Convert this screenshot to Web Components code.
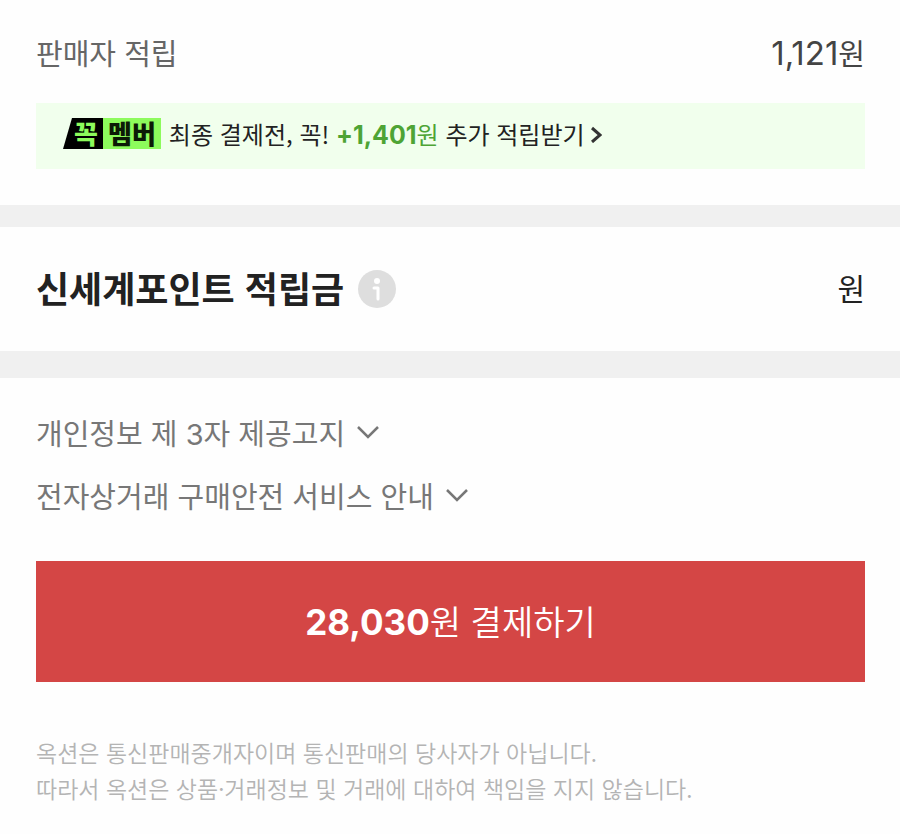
<!DOCTYPE html>
<html lang="ko">
<head>
<meta charset="utf-8">
<meta name="viewport" content="width=device-width, initial-scale=1">
<title>결제하기</title>
<style>
  body {
    margin: 0;
    background: #fefefe;
    color: #333;
    font-family: "Noto Sans CJK KR", "Noto Sans", sans-serif;
  }
</style>
</head>
<body>
<checkout-page></checkout-page>

<script>
const amountTemplate = document.createElement('template');
amountTemplate.innerHTML = `<style>
  :host { display: inline; white-space: nowrap; }
  .number {
    font-family: Inter, sans-serif;
    font-size: var(--number-size, inherit);
    line-height: 1;
  }
  :host([strong]) .number { font-weight: 700; }
</style><span class="number"><slot></slot></span>원`;

class WonAmount extends HTMLElement {
  constructor() {
    super();
    this.attachShadow({mode: 'open'}).appendChild(amountTemplate.content.cloneNode(true));
  }
}
customElements.define('won-amount', WonAmount);


const summaryTemplate = document.createElement('template');
summaryTemplate.innerHTML = `<style>
  :host {
    display: flex;
    justify-content: space-between;
    align-items: baseline;
    font-size: 29px;
    line-height: 40px;
    color: #444;
    --number-size: 33px;
  }
  .label { color: #666; }
</style>
<span class="label"><slot name="label"></slot></span>
<span><slot></slot></span>`;

class SummaryRow extends HTMLElement {
  constructor() {
    super();
    this.attachShadow({mode: 'open'}).appendChild(summaryTemplate.content.cloneNode(true));
  }
}
customElements.define('summary-row', SummaryRow);


const badgeTemplate = document.createElement('template');
badgeTemplate.innerHTML = `<style>
  :host {
    display: inline-flex;
    height: 31px;
    font-size: 26px;
    font-weight: 900;
    line-height: 30px;
  }
  .mark {
    box-sizing: border-box;
    width: 40px;
    padding-left: 11px;
    background: #000;
    color: #8dfb5c;
    clip-path: polygon(9px 0, 100% 0, 100% 100%, 0 100%);
  }
  .name {
    padding: 0 5px;
    background: #8dfb5c;
    color: #0c1a06;
  }
</style>
<span class="mark">꼭</span><span class="name">멤버</span>`;

class MemberBadge extends HTMLElement {
  constructor() {
    super();
    this.attachShadow({mode: 'open'}).appendChild(badgeTemplate.content.cloneNode(true));
  }
}
customElements.define('member-badge', MemberBadge);


const bannerTemplate = document.createElement('template');
bannerTemplate.innerHTML = `<style>
  :host { display: block; }
  a {
    display: flex;
    align-items: center;
    gap: 8px;
    box-sizing: border-box;
    min-height: 66px;
    padding: 0 27px 5px;
    background: #f1ffed;
    color: #222;
    font-size: 24px;
    line-height: 32px;
    text-decoration: none;
    --number-size: 25px;
  }
  won-amount { color: #4ea435; }
  svg { margin-left: -3px; }
</style>
<a href="#member">
  <member-badge></member-badge>
  <span>최종 결제전, 꼭! <won-amount strong>+1,401</won-amount> 추가 적립받기</span>
  <svg width="12" height="18" viewBox="0 0 12 18" fill="none" stroke="#333" stroke-width="3" aria-hidden="true"><path d="M2 3l8 7-8 7"/></svg>
</a>`;

class MemberBanner extends HTMLElement {
  constructor() {
    super();
    this.attachShadow({mode: 'open'}).appendChild(bannerTemplate.content.cloneNode(true));
  }
}
customElements.define('member-banner', MemberBanner);


const pointTemplate = document.createElement('template');
pointTemplate.innerHTML = `<style>
  :host {
    display: flex;
    align-items: center;
    justify-content: space-between;
    color: #222;
    font-size: 30px;
  }
  .title { display: flex; align-items: center; gap: 14px; }
  h2 { margin: 0; font-size: 36px; font-weight: 700; }
  h2, .unit { padding-bottom: 4px; line-height: 48px; }
  button {
    display: block;
    padding: 0;
    border: 0;
    background: none;
    cursor: pointer;
  }
  svg { display: block; }
</style>
<div class="title">
  <h2><slot></slot></h2>
  <button type="button" aria-label="안내">
    <svg width="38" height="38" viewBox="0 0 38 38">
      <circle cx="19" cy="19" r="19" fill="#dedede"/>
      <circle cx="19" cy="11" r="3" fill="#fff"/>
      <path d="M16 18h4v11" fill="none" stroke="#fff" stroke-width="3" stroke-linecap="round" stroke-linejoin="round"/>
    </svg>
  </button>
</div>
<span class="unit">원</span>`;

class PointRow extends HTMLElement {
  constructor() {
    super();
    this.attachShadow({mode: 'open'}).appendChild(pointTemplate.content.cloneNode(true));
  }
}
customElements.define('point-row', PointRow);


const toggleTemplate = document.createElement('template');
toggleTemplate.innerHTML = `<style>
  :host { display: block; }
  button {
    display: flex;
    align-items: center;
    gap: 12px;
    padding: 0;
    border: 0;
    background: none;
    color: #777;
    font: inherit;
    font-size: 29px;
    line-height: 42px;
    cursor: pointer;
  }
</style>
<button type="button" aria-expanded="false">
  <span><slot></slot></span>
  <svg width="22" height="14" viewBox="0 0 22 14" fill="none" stroke="#777" stroke-width="2.5" aria-hidden="true"><path d="M1 2l10 10L21 2"/></svg>
</button>`;

class NoticeToggle extends HTMLElement {
  constructor() {
    super();
    this.attachShadow({mode: 'open'}).appendChild(toggleTemplate.content.cloneNode(true));
    this.$button = this.shadowRoot.querySelector('button');
  }

  connectedCallback() {
    this.$button.addEventListener('click', () => {
      const open = this.$button.getAttribute('aria-expanded') === 'true';
      this.$button.setAttribute('aria-expanded', String(!open));
    });
  }
}
customElements.define('notice-toggle', NoticeToggle);


const payTemplate = document.createElement('template');
payTemplate.innerHTML = `<style>
  :host { display: block; }
  button {
    display: block;
    width: 100%;
    padding: 36px 16px 37px;
    border: 0;
    background: #d44645;
    color: #fff;
    font: inherit;
    font-size: 34px;
    font-weight: 350;
    line-height: 48px;
    cursor: pointer;
    --number-size: 35px;
  }
</style>
<button type="button"><slot></slot></button>`;

class PayButton extends HTMLElement {
  constructor() {
    super();
    this.attachShadow({mode: 'open'}).appendChild(payTemplate.content.cloneNode(true));
  }
}
customElements.define('pay-button', PayButton);


const pageTemplate = document.createElement('template');
pageTemplate.innerHTML = `<style>
  :host { display: block; }
  section { padding: 0 35px 0 36px; }
  .saving { padding-top: 32px; padding-bottom: 36px; }
  .saving member-banner { margin-top: 31px; }
  .points {
    padding-top: 36px;
    padding-bottom: 36px;
    border: solid #f0f0f0;
    border-width: 22px 0 27px;
  }
  .order { padding-top: 33px; padding-bottom: 24px; }
  .toggles { display: grid; gap: 21px; }
  .number { font-family: Inter, sans-serif; line-height: 1; }
  pay-button { margin-top: 45px; }
  p {
    margin: 52px 0 0;
    color: #b4b4b4;
    font-size: 23px;
    font-weight: 350;
    line-height: 36px;
  }
</style>
<section class="saving">
  <summary-row><span slot="label">판매자 적립</span><won-amount>1,121</won-amount></summary-row>
  <member-banner></member-banner>
</section>
<section class="points">
  <point-row>신세계포인트 적립금</point-row>
</section>
<section class="order">
  <div class="toggles">
    <notice-toggle>개인정보 제 <span class="number">3</span>자 제공고지</notice-toggle>
    <notice-toggle>전자상거래 구매안전 서비스 안내</notice-toggle>
  </div>
  <pay-button><won-amount strong>28,030</won-amount> 결제하기</pay-button>
  <p>옥션은 통신판매중개자이며 통신판매의 당사자가 아닙니다.<br>따라서 옥션은 상품·거래정보 및 거래에 대하여 책임을 지지 않습니다.</p>
</section>`;

class CheckoutPage extends HTMLElement {
  constructor() {
    super();
    this.attachShadow({mode: 'open'}).appendChild(pageTemplate.content.cloneNode(true));
  }
}
customElements.define('checkout-page', CheckoutPage);
</script>
</body>
</html>
